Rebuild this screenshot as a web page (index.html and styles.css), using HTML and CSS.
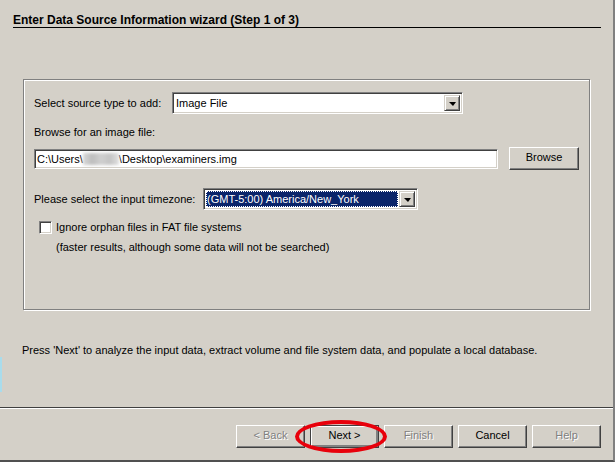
FILE: index.html
```html
<!DOCTYPE html>
<html lang="en">
    <head>
        <meta charset="utf-8">
        <title>Add Data Source</title>
        <link rel="stylesheet" href="styles.css">
    </head>
    <body>
        <div id='wizard'>

            <div class='desktopSliver'></div>

            <div class='wizardBody'>

                <div class='header'>
                    <div class='title'>Enter Data Source Information wizard (Step 1 of 3)</div>
                </div>

                <div class='groupPanel'>

                    <div class='row rowSource'>
                        <div class='label labelSource'>Select source type to add:</div>
                        <div class='combo comboSource'>
                            <div class='comboText'>Image File</div>
                            <div class='comboArrow'><span class='arrowGlyph'></span></div>
                        </div>
                    </div>

                    <div class='label labelBrowse'>Browse for an image file:</div>

                    <div class='row rowPath'>
                        <div class='textField'>
                            <span>C:\Users\</span><span class='blurred'></span><span>\Desktop\examiners.img</span>
                        </div>
                        <div class='button browseButton'>Browse</div>
                    </div>

                    <div class='row rowZone'>
                        <div class='label labelZone'>Please select the input timezone:</div>
                        <div class='combo comboZone'>
                            <div class='comboText selected'>(GMT-5:00) America/New_York</div>
                            <div class='comboArrow'><span class='arrowGlyph'></span></div>
                        </div>
                    </div>

                    <div class='row rowCheck'>
                        <div class='checkBox'></div>
                        <div class='label'>Ignore orphan files in FAT file systems</div>
                    </div>

                    <div class='label note'>(faster results, although some data will not be searched)</div>

                </div>

                <div class='label message'>Press 'Next' to analyze the input data, extract volume and file system data, and populate a local database.</div>

            </div>

            <div class='buttonBar'>
                <div class='button disabled'>&lt; Back</div>
                <div class='nextWrap'>
                    <div class='button defaultButton'>Next &gt;</div>
                    <div class='redCircle'></div>
                </div>
                <div class='button disabled'>Finish</div>
                <div class='button'>Cancel</div>
                <div class='button disabled'>Help</div>
            </div>

        </div>
    </body>
</html>
```

FILE: styles.css
```css
body
{
    margin:           0px;
    background-color: #d4d0c8;
}

#wizard
{
    position:         relative;
    width:            613px;
    height:           460px;
    background-color: #d4d0c8;
    border-right:     2px solid #808080;
    border-bottom:    2px solid #505050;
    font-family:      "Liberation Sans", Arial, sans-serif;
    font-size:        11px;
    color:            #000;
}

.desktopSliver
{
    position:         absolute;
    left:             0px;
    top:              357px;
    width:            2px;
    height:           35px;
    background-color: #a9dcec;
}

.wizardBody
{
    height:           407px;
    border-bottom:    1px solid #404040;
    box-shadow:       0px 1px 0px #ffffff;
}

.header
{
    padding:          14px 12px 0px 13px;
}

.title
{
    font-size:        12px;
    font-weight:      bold;
    line-height:      13px;
    color:            #000;
    border-bottom:    1px solid #000;
}

.groupPanel
{
    margin:           51px 0px 0px 23px;
    width:            555px;
    height:           217px;
    padding:          12px 0px 0px 10px;
    border:           1px solid #808080;
    box-shadow:       1px 1px 0px #ffffff, inset 1px 1px 0px #ffffff;
}

.row
{
    display:          flex;
    align-items:      center;
}

.label
{
    line-height:      13px;
    white-space:      nowrap;
}

.labelSource
{
    width:            138px;
}

.labelZone
{
    width:            169px;
}

.labelBrowse
{
    margin-top:       12px;
}

.rowPath
{
    margin-top:       8px;
}

.rowZone
{
    margin-top:       18px;
}

.rowCheck
{
    margin-top:       11px;
    padding-left:     5px;
}

.note
{
    margin-top:       7px;
    padding-left:     22px;
}

/* sunken 3D frame used by the combos and the text field */
.combo, .textField
{
    box-sizing:       border-box;
    border-style:     solid;
    border-width:     1px;
    border-color:     #808080 #ffffff #ffffff #808080;
    box-shadow:       inset 1px 1px 0px #404040, inset -1px -1px 0px #d4d0c8;
    background-color: #ffffff;
}

.combo
{
    display:          flex;
    height:           22px;
    padding:          2px;
}

.comboSource
{
    width:            291px;
}

.comboZone
{
    width:            215px;
}

.comboText
{
    flex:             1;
    line-height:      16px;
    padding-left:     1px;
}

.selected
{
    background-color: #0a246a;
    color:            #ffffff;
    outline:          1px dotted #ffffff;
    outline-offset:   -1px;
    margin-right:     1px;
}

.comboArrow
{
    box-sizing:       border-box;
    width:            16px;
    height:           16px;
    display:          flex;
    align-items:      center;
    justify-content:  center;
    background-color: #d4d0c8;
    border-style:     solid;
    border-width:     1px;
    border-color:     #d4d0c8 #404040 #404040 #d4d0c8;
    box-shadow:       inset 1px 1px 0px #ffffff, inset -1px -1px 0px #808080;
}

.arrowGlyph
{
    width:            0px;
    height:           0px;
    border-left:      4px solid transparent;
    border-right:     3px solid transparent;
    border-top:       4px solid #000;
    margin-top:       1px;
}

.textField
{
    width:            464px;
    height:           20px;
    line-height:      16px;
    padding-left:     2px;
    display:          flex;
    align-items:      center;
    white-space:      nowrap;
}

.blurred
{
    display:          inline-block;
    width:            36px;
    height:           12px;
    background:       linear-gradient(90deg, #d8d8d8, #bdbdbd, #cfcfcf, #c4c4c4, #e0e0e0);
    filter:           blur(1.5px);
}

.button
{
    box-sizing:       border-box;
    width:            69px;
    height:           23px;
    line-height:      19px;
    text-align:       center;
    background-color: #d4d0c8;
    border-style:     solid;
    border-width:     1px;
    border-color:     #ffffff #404040 #404040 #ffffff;
    box-shadow:       inset -1px -1px 0px #808080;
}

.browseButton
{
    width:            70px;
    margin-left:      11px;
}

.disabled
{
    color:            #808080;
    text-shadow:      1px 1px 0px #ffffff;
}

.defaultButton
{
    border-color:     #404040;
    box-shadow:       inset 1px 1px 0px #ffffff, inset -2px -2px 0px #808080;
}

.checkBox
{
    box-sizing:       border-box;
    width:            13px;
    height:           13px;
    margin-right:     4px;
    background-color: #ffffff;
    border-style:     solid;
    border-width:     1px;
    border-color:     #808080 #ffffff #ffffff #808080;
    box-shadow:       inset 1px 1px 0px #404040, inset -1px -1px 0px #d4d0c8;
}

.message
{
    margin:           34px 0px 0px 22px;
}

.buttonBar
{
    display:          flex;
    justify-content:  flex-end;
    gap:              5px;
    padding:          17px 12px 0px 0px;
}

.nextWrap
{
    position:         relative;
}

.redCircle
{
    position:         absolute;
    left:             -15px;
    top:              -5px;
    width:            92px;
    height:           33px;
    box-sizing:       border-box;
    border:           4px solid #e8000b;
    border-radius:    50%;
}
```
